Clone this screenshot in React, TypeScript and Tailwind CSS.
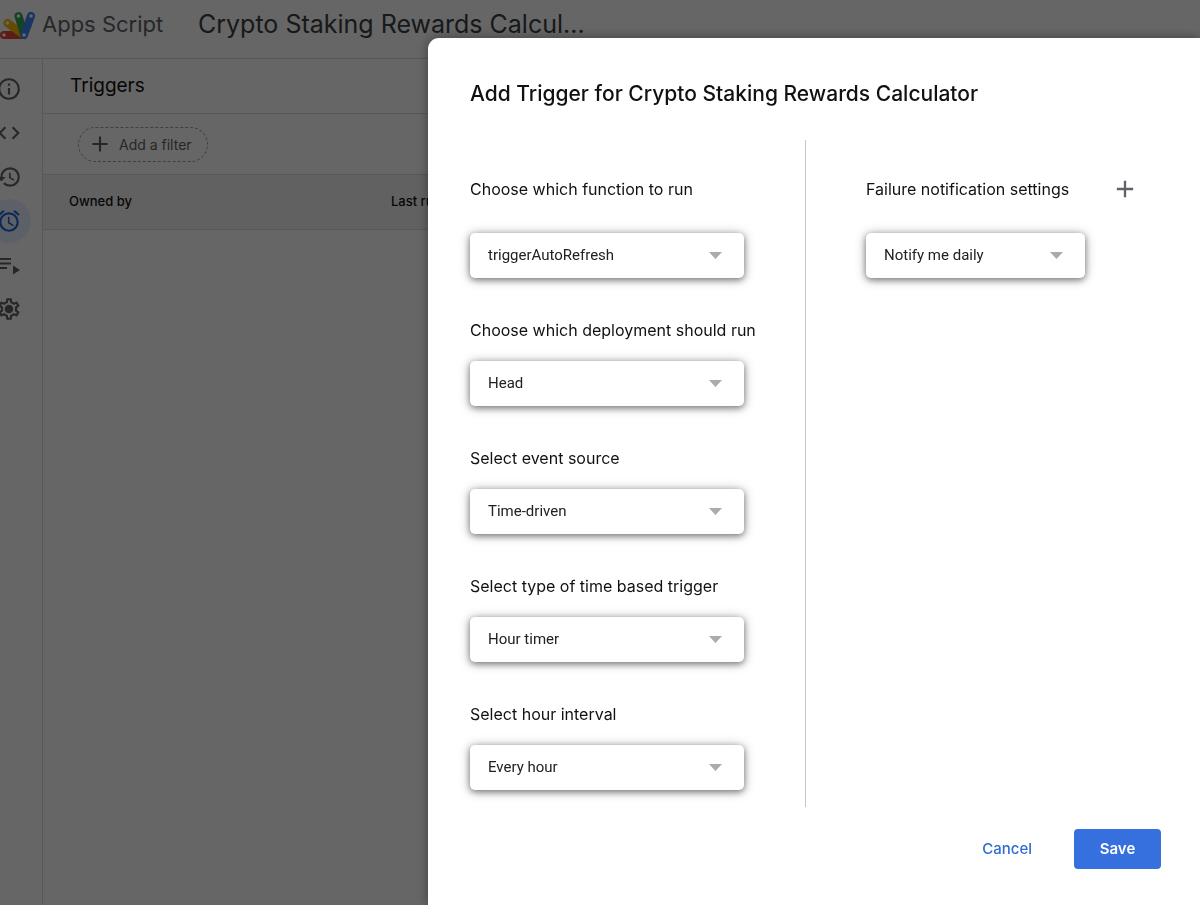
import { useId } from "react";
import type { ReactNode } from "react";
import clsx from "clsx";
import {
  MdAdd,
  MdCode,
  MdHistory,
  MdOutlineAlarm,
  MdOutlineInfo,
  MdOutlineSettings,
} from "react-icons/md";

function AppsScriptLogo() {
  return (
    <svg width="38" height="32" viewBox="0 0 38 32" aria-hidden="true">
      <g strokeLinecap="round" strokeWidth="8">
        <path d="M4 27H23" stroke="#ea4335" />
        <path d="M7.500 15L23 26.500" stroke="#fbbc04" />
        <path d="M18.500 8L24 26" stroke="#34a853" />
        <path d="M31 8L24 27" stroke="#4285f4" />
      </g>
      <g fill="#fff">
        <circle cx="4" cy="27" r="1.800" />
        <circle cx="7.500" cy="15" r="1.800" />
        <circle cx="18.500" cy="8" r="1.800" />
        <circle cx="31" cy="8" r="1.800" />
        <circle cx="24" cy="27" r="1.800" />
      </g>
    </svg>
  );
}

function ExecutionsIcon() {
  return (
    <svg width="26" height="26" viewBox="0 0 26 26" fill="currentColor" aria-hidden="true">
      <path d="M2 6h13v2H2zM2 10.500h13v2H2zM2 15h9v2H2zM17 13.500v9l7-4.500z" />
    </svg>
  );
}

function SettingsIcon() {
  return (
    <svg width="26" height="26" viewBox="0 0 24 24" fill="currentColor" aria-hidden="true">
      <MdOutlineSettings size={24} />
      <circle cx="12" cy="12" r="3" />
    </svg>
  );
}

const navItems: { label: string; icon: ReactNode; active?: boolean }[] = [
  { label: "Overview", icon: <MdOutlineInfo size={26} /> },
  { label: "Editor", icon: <MdCode size={26} /> },
  { label: "Project history", icon: <MdHistory size={26} /> },
  { label: "Triggers", icon: <MdOutlineAlarm size={26} />, active: true },
  { label: "Executions", icon: <ExecutionsIcon /> },
  { label: "Project settings", icon: <SettingsIcon /> },
];

function Dropdown({ id, value }: { id: string; value: string }) {
  return (
    <div className="relative">
      <select
        id={id}
        defaultValue={value}
        className="h-[45px] w-full appearance-none rounded-[5px] bg-white pr-10 pl-[18px] font-['Roboto',sans-serif] text-[15px] text-[#202124] shadow-[0_2px_6px_rgba(0,0,0,0.4),0_1px_12px_rgba(0,0,0,0.3)] outline-none"
      >
        <option>{value}</option>
      </select>
      <svg
        width="13"
        height="7"
        viewBox="0 0 13 7"
        aria-hidden="true"
        className="pointer-events-none absolute top-[19px] right-[22px] fill-[#ababab]"
      >
        <path d="M0 0h13L6.500 7z" />
      </svg>
    </div>
  );
}

function Field({ label, value, first }: { label: string; value: string; first?: boolean }) {
  const id = useId();
  return (
    <div className={clsx("flex flex-col", first ? "gap-8" : "gap-[19px]")}>
      <label htmlFor={id} className="text-[16px] leading-6 whitespace-nowrap">
        {label}
      </label>
      <Dropdown id={id} value={value} />
    </div>
  );
}

function TriggersPage() {
  return (
    <div className="flex min-h-screen flex-col bg-white">
      <header className="flex h-[59px] items-center border-b border-[#dadce0] pb-[10px]">
        <a href="#" className="flex items-center gap-1 text-[#5f6368]">
          <AppsScriptLogo />
          <span className="w-[148px] text-[22px] leading-8 whitespace-nowrap">Apps Script</span>
        </a>
        <h1 className="pl-2 text-[25px] leading-8 whitespace-nowrap text-[#3c4043]">
          Crypto Staking Rewards Calcul...
        </h1>
      </header>
      <div className="flex flex-1">
        <nav className="-ml-6 flex w-[67px] shrink-0 flex-col items-center border-r border-[#dadce0] pt-2">
          {navItems.map((item) => (
            <button
              key={item.label}
              type="button"
              aria-label={item.label}
              className={clsx(
                "flex size-11 items-center justify-center rounded-full",
                item.active ? "bg-[#e8f0fe] text-[#1967d2]" : "text-[#5f6368]",
              )}
            >
              {item.icon}
            </button>
          ))}
        </nav>
        <main className="min-w-0 flex-1">
          <h2 className="h-[55px] border-b border-[#dadce0] pl-[27px] text-[19px] leading-[54px]">
            Triggers
          </h2>
          <div className="flex h-[61px] items-center border-b border-[#dadce0] pl-[35px]">
            <button
              type="button"
              className="flex h-[35px] w-[130px] items-center gap-[6px] rounded-full border border-dashed border-[#9aa0a6] pl-2 text-[14px] whitespace-nowrap text-[#5f6368]"
            >
              <MdAdd size={26} />
              Add a filter
            </button>
          </div>
          <table className="w-full table-fixed text-left text-[13px] font-medium">
            <thead>
              <tr className="h-[54px] border-b border-[#dadce0] bg-[#f3f3f3]">
                <th className="w-[348px] pl-[26px] font-medium">Owned by</th>
                <th className="font-medium">Last run</th>
              </tr>
            </thead>
          </table>
        </main>
      </div>
    </div>
  );
}

function AddTriggerDialog() {
  return (
    <section
      role="dialog"
      aria-modal="true"
      aria-labelledby="dialog-title"
      className="flex-1 rounded-tl-[11px] bg-white pt-10 pr-[39px] pl-[42px] shadow-[0_0_12px_rgba(0,0,0,0.4)]"
    >
      <h2 id="dialog-title" className="text-[21px] leading-8 font-medium whitespace-nowrap">
        Add Trigger for Crypto Staking Rewards Calculator
      </h2>
      <form onSubmit={(e) => e.preventDefault()}>
        <div className="mt-[30px] flex">
          <div className="flex w-[336px] shrink-0 flex-col gap-10 border-r border-[#c6c6c6] pt-[37px] pr-[61px] pb-[17px]">
            <Field first label="Choose which function to run" value="triggerAutoRefresh" />
            <Field label="Choose which deployment should run" value="Head" />
            <Field label="Select event source" value="Time-driven" />
            <Field label="Select type of time based trigger" value="Hour timer" />
            <Field label="Select hour interval" value="Every hour" />
          </div>
          <div className="flex items-start gap-[26px] pt-[37px] pl-[60px]">
            <div className="w-[219px]">
              <Field first label="Failure notification settings" value="Notify me daily" />
            </div>
            <button
              type="button"
              aria-label="Add notification"
              className="flex h-6 w-7 items-center justify-center text-[#5f6368]"
            >
              <MdAdd size={28} />
            </button>
          </div>
        </div>
        <div className="mt-[22px] flex justify-end gap-[18px] text-[15px] font-medium">
          <button type="button" className="h-10 rounded px-6 text-[#2f6bd0]">
            Cancel
          </button>
          <button type="submit" className="h-10 w-[87px] rounded bg-[#3670de] font-semibold text-white">
            Save
          </button>
        </div>
      </form>
    </section>
  );
}

export default function App() {
  return (
    <div className="relative overflow-hidden font-['Inter',sans-serif] text-[#111]">
      <TriggersPage />
      <div className="fixed inset-0 flex overflow-hidden bg-black/60 pt-[38px] pl-[428px]">
        <AddTriggerDialog />
      </div>
    </div>
  );
}
